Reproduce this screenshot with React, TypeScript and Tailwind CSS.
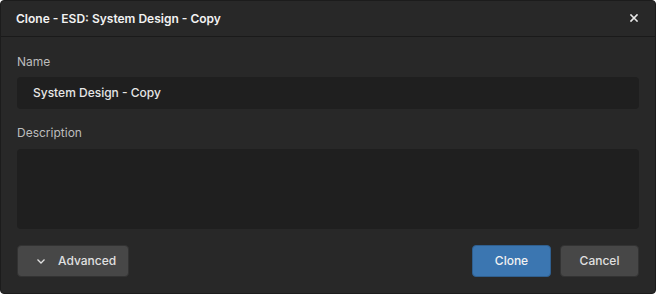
import React from "react";

export default function App() {
  return (
    <div className="w-[656px] h-[294px] bg-white" style={{ fontFamily: "Inter, 'Liberation Sans', sans-serif" }}>
      <div className="w-[656px] h-[294px] rounded-[4px] border border-[#1c1c1c] bg-[#282828] flex flex-col overflow-hidden">
        <div className="h-[36px] shrink-0 flex items-center justify-between pl-[15px] pr-[16px] border-b border-[#1a1a1a]">
          <span className="text-[12px] font-semibold text-[#f2f2f2]">Clone - ESD: System Design - Copy</span>
          <svg width="10" height="10" viewBox="0 0 10 10" className="mt-[-1px]">
            <path d="M2 2 L8 8 M8 2 L2 8" stroke="#e8e8e8" strokeWidth="1.6" strokeLinecap="square" />
          </svg>
        </div>
        <div className="flex flex-col px-[16px] pt-[16px]">
          <label className="text-[12px] text-[#bdbdbd] leading-[18px]">Name</label>
          <div className="mt-[6px] h-[32px] rounded-[4px] bg-[#1f1f1f] flex items-center pl-[16px] text-[12px] font-medium text-[#e6e6e6]">
            System Design - Copy
          </div>
          <label className="mt-[15px] text-[12px] text-[#bdbdbd] leading-[18px]">Description</label>
          <div className="mt-[7px] h-[80px] rounded-[4px] bg-[#1f1f1f]" />
          <div className="mt-[16px] flex items-center">
            <button className="w-[112px] h-[32px] rounded-[4px] bg-[#474747] border border-[#333333] flex items-center pl-[17px] gap-[11px] text-[12px] font-medium text-[#e0e0e0]">
              <svg width="12" height="12" viewBox="0 0 12 12">
                <path d="M2.5 4.5 L6 8 L9.5 4.5" stroke="#e0e0e0" strokeWidth="1.3" fill="none" />
              </svg>
              Advanced
            </button>
            <div className="flex-1" />
            <button className="w-[79px] h-[32px] rounded-[4px] bg-[#3b76b1] border border-[#2f5f8f] text-[12px] font-medium text-[#f2f2f2]">
              Clone
            </button>
            <button className="ml-[9px] w-[79px] h-[32px] rounded-[4px] bg-[#474747] border border-[#333333] text-[12px] font-medium text-[#e0e0e0]">
              Cancel
            </button>
          </div>
        </div>
      </div>
    </div>
  );
}
